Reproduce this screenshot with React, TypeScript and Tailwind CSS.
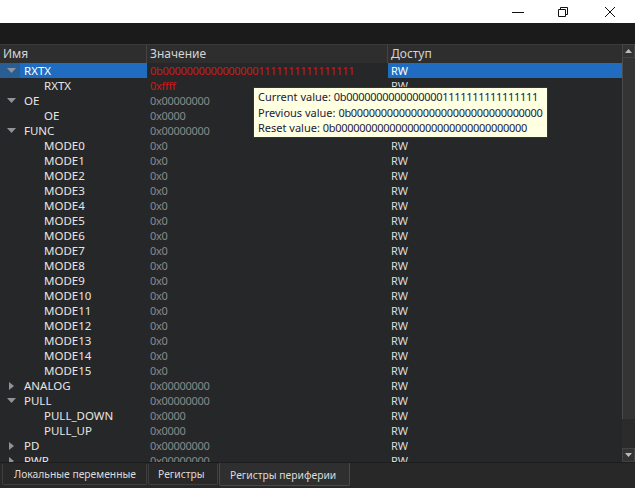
import React from 'react';

type Row = { name: string; value: string; level: 0 | 1; arrow?: 'open' | 'closed'; red?: boolean; selected?: boolean };

const modes: Row[] = Array.from({ length: 16 }, (_, i) => ({ name: `MODE${i}`, value: '0x0', level: 1 }));

const rows: Row[] = [
  { name: 'RXTX', value: '0b00000000000000001111111111111111', level: 0, arrow: 'open', red: true, selected: true },
  { name: 'RXTX', value: '0xffff', level: 1, red: true },
  { name: 'OE', value: '0x00000000', level: 0, arrow: 'open' },
  { name: 'OE', value: '0x0000', level: 1 },
  { name: 'FUNC', value: '0x00000000', level: 0, arrow: 'open' },
  ...modes,
  { name: 'ANALOG', value: '0x00000000', level: 0, arrow: 'closed' },
  { name: 'PULL', value: '0x00000000', level: 0, arrow: 'open' },
  { name: 'PULL_DOWN', value: '0x0000', level: 1 },
  { name: 'PULL_UP', value: '0x0000', level: 1 },
  { name: 'PD', value: '0x00000000', level: 0, arrow: 'closed' },
  { name: 'PWR', value: '0x00000000', level: 0, arrow: 'closed' },
];

function Arrow({ kind }: { kind?: 'open' | 'closed' }) {
  if (!kind) return null;
  return kind === 'open' ? (
    <svg width="9" height="5" viewBox="0 0 9 5" className="ml-[7px]">
      <path d="M0 0h9L4.5 5z" fill="#8f9499" />
    </svg>
  ) : (
    <svg width="5" height="8" viewBox="0 0 5 8" className="ml-[9px]">
      <path d="M0 0l5 4-5 4z" fill="#8f9499" />
    </svg>
  );
}

function TreeRow({ r }: { r: Row }) {
  return (
    <div className="flex h-[15px] shrink-0 items-center leading-[15px]">
      <div className={`flex h-full w-[20px] items-center ${r.selected ? 'bg-[#2a5d93]' : ''}`}>
        <Arrow kind={r.arrow} />
      </div>
      <div
        className={`h-full w-[127px] whitespace-nowrap text-[11.5px] ${r.selected ? 'bg-[#1f6cc0] text-white' : 'text-[#e6e6e6]'} ${r.level === 1 ? 'pl-[24px]' : 'pl-[4px]'}`}
      >
        {r.name}
      </div>
      <div className={`h-full w-[241px] whitespace-nowrap pl-[3px] tracking-[-0.3px] ${r.red ? 'text-[#d01818]' : 'text-[#8a8a8a]'}`}>
        {r.value}
      </div>
      <div className={`h-full flex-1 pl-[3px] ${r.selected ? 'bg-[#1f6cc0] text-white' : 'text-[#dcdcdc]'}`}>RW</div>
    </div>
  );
}

export default function App() {
  return (
    <div
      className="relative flex h-[488px] w-[635px] flex-col overflow-hidden bg-[#262728] text-[11px]"
      style={{ fontFamily: '"Segoe UI", "Noto Sans", sans-serif' }}
    >
      <div className="flex h-[23px] shrink-0 items-center justify-end bg-white pr-[20px]">
        <svg width="12" height="10" viewBox="0 0 12 10" className="mr-[34px]">
          <path d="M0 5.5h12" stroke="#111" strokeWidth="1" />
        </svg>
        <svg width="10" height="10" viewBox="0 0 10 10" className="mr-[37px]">
          <path d="M0.5 2.5h7v7h-7z M2.5 2.5v-2h7v7h-2" stroke="#111" strokeWidth="1" fill="none" />
        </svg>
        <svg width="10" height="10" viewBox="0 0 10 10">
          <path d="M0 0l10 10M10 0L0 10" stroke="#111" strokeWidth="1" />
        </svg>
      </div>
      <div className="h-[21px] shrink-0 bg-[#1b1b1b]" />
      <div className="flex min-h-0 flex-1">
        <div className="flex min-w-0 flex-1 flex-col overflow-hidden">
          <div className="flex h-[19px] shrink-0 items-center border-t border-[#3a3a3a] bg-[#2e2e2f] text-[12px] text-[#d4d4d4]">
            <div className="h-full w-[147px] border-r border-[#444] pl-[3px] leading-[18px]">Имя</div>
            <div className="h-full w-[241px] border-r border-[#444] pl-[3px] leading-[18px]">Значение</div>
            <div className="h-full flex-1 pl-[3px] leading-[18px]">Доступ</div>
          </div>
          {rows.map((r, i) => (
            <TreeRow key={i} r={r} />
          ))}
        </div>
        <div className="flex w-[13px] shrink-0 flex-col bg-[#2b2b2b]">
          <div className="flex h-[14px] items-center justify-center border border-[#444] bg-[#333]">
            <svg width="7" height="4" viewBox="0 0 7 4"><path d="M0 4h7L3.5 0z" fill="#bbb" /></svg>
          </div>
          <div className="h-[361px] border-l border-[#4c4c4c] bg-[#343434]" />
          <div className="flex-1" />
          <div className="flex h-[14px] items-center justify-center border border-[#444] bg-[#333]">
            <svg width="7" height="4" viewBox="0 0 7 4"><path d="M0 0h7L3.5 4z" fill="#bbb" /></svg>
          </div>
        </div>
      </div>
      <div className="flex h-[26px] shrink-0 items-start border-t border-[#1c1c1c] bg-[#282828] pl-[2px] text-[10.3px] text-[#dcdcdc]">
        <div className="mt-[1px] h-[21px] w-[145px] rounded-b-[2px] border border-t-0 border-[#3f3f3f] pl-[11px] leading-[20px]">
          Локальные переменные
        </div>
        <div className="ml-[1px] mt-[1px] h-[21px] w-[70px] rounded-b-[2px] border border-t-0 border-[#3f3f3f] pl-[9px] leading-[20px]">
          Регистры
        </div>
        <div className="ml-[1px] h-[23px] w-[131px] rounded-b-[2px] border border-t-0 border-[#4a4a4a] bg-[#2f2f2f] pl-[10px] leading-[24px]">
          Регистры периферии
        </div>
      </div>
      <div className="absolute left-[253px] top-[87px] border border-[#333] bg-[#ffffe1] px-[4px] py-[1px] text-[11px] leading-[15.5px] text-[#1a1a40]">
        <div>
          Current value: <span className="tracking-[-0.3px]">0b00000000000000001111111111111111</span>
        </div>
        <div>
          Previous value: <span className="tracking-[-0.3px]">0b00000000000000000000000000000000</span>
        </div>
        <div>
          Reset value: <span className="tracking-[-0.3px]">0b00000000000000000000000000000000</span>
        </div>
      </div>
    </div>
  );
}
